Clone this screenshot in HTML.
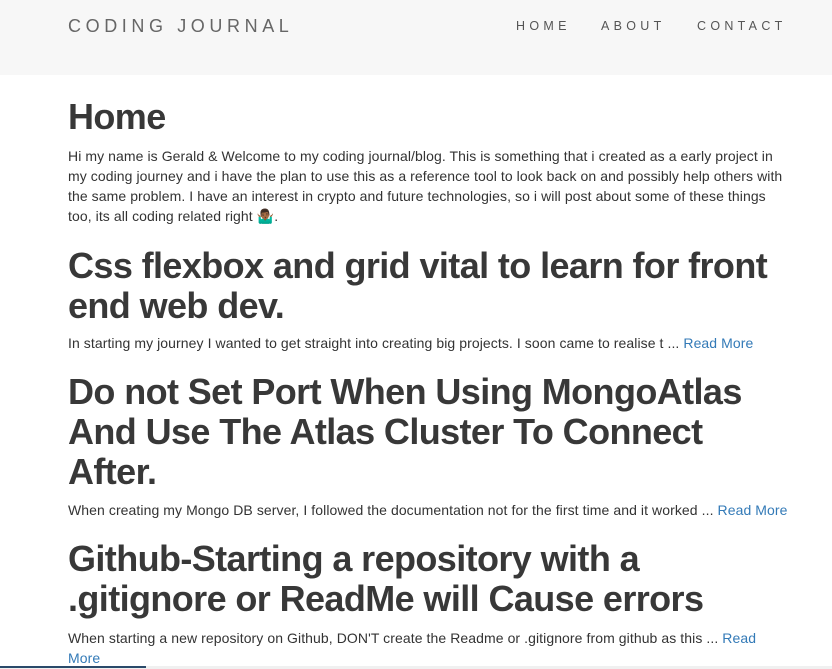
<!DOCTYPE html>
<html><head><meta charset="utf-8"><style>
html,body{margin:0;padding:0;width:832px;height:669px;overflow:hidden;background:#fff;font-family:"Liberation Sans",Arial,sans-serif;color:#333}
.nav{position:absolute;left:0;top:0;width:832px;height:75px;background:#f7f7f7}
.brand{position:absolute;left:68px;top:15px;font-size:18px;letter-spacing:4.6px;color:#666;line-height:22px}
.nl{position:absolute;top:18px;font-size:12.5px;letter-spacing:4.3px;color:#555;line-height:16px}
.b{position:absolute;left:68px;white-space:nowrap}
.h{font-size:36px;line-height:40px;color:#383838;font-weight:bold;letter-spacing:-0.6px}
.p{font-size:14px;line-height:20px;color:#333;letter-spacing:0.08px}
a{color:#337ab7;text-decoration:none}
.bot{position:absolute;left:0;top:666px;width:832px;height:3px;background:#f0f0f0}
.bot2{position:absolute;left:0;top:666px;width:146px;height:2px;background:#2a4a6a}
</style></head><body>
<div class="nav">
<div class="brand">CODING JOURNAL</div>
<div class="nl" style="left:516px">HOME</div>
<div class="nl" style="left:601px">ABOUT</div>
<div class="nl" style="left:697px">CONTACT</div>
</div>
<div class="b h" style="top:97px">Home</div>
<div class="b p" style="top:146px">Hi my name is Gerald &amp; Welcome to my coding journal/blog. This is something that i created as a early project in<br>my coding journey and i have the plan to use this as a reference tool to look back on and possibly help others with<br>the same problem. I have an interest in crypto and future technologies, so i will post about some of these things<br>too, its all coding related right 🤷🏾‍♂️.</div>
<div class="b h" style="top:246px">Css flexbox and grid vital to learn for front<br>end web dev.</div>
<div class="b p" style="top:333px">In starting my journey I wanted to get straight into creating big projects. I soon came to realise t ... <a>Read More</a></div>
<div class="b h" style="top:372px">Do not Set Port When Using MongoAtlas<br>And Use The Atlas Cluster To Connect<br>After.</div>
<div class="b p" style="top:500px">When creating my Mongo DB server, I followed the documentation not for the first time and it worked ... <a>Read More</a></div>
<div class="b h" style="top:539px">Github-Starting a repository with a<br>.gitignore or ReadMe will Cause errors</div>
<div class="b p" style="top:628px">When starting a new repository on Github, DON'T create the Readme or .gitignore from github as this ... <a>Read</a><br><a>More</a></div>
<div class="bot"></div><div class="bot2"></div>
</body></html>
